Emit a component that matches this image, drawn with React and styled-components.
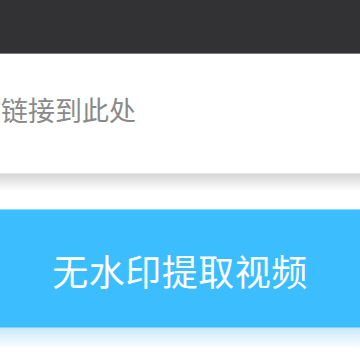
import React from "react";
import styled, { createGlobalStyle } from "styled-components";

const Global = createGlobalStyle`
  html, body { margin: 0; padding: 0; background: #ffffff; }
  body { font-family: "Noto Sans CJK SC", "Noto Sans", sans-serif; overflow: hidden; }
`;

const Page = styled.div`
  width: 360px;
  height: 360px;
  display: flex;
  flex-direction: column;
  background: #ffffff;
  overflow: hidden;
`;

const TopBar = styled.div`
  height: 53px;
  flex: none;
  background: #323234;
  border-bottom: 1px solid #7a7a7a;
`;

const InputPanel = styled.div`
  height: 119px;
  flex: none;
  display: flex;
  align-items: center;
  overflow: hidden;
  background: #ffffff;
  border-bottom: 1px solid #e6e6e6;
`;

const Field = styled.input`
  flex: none;
  width: 420px;
  margin-left: -53px;
  padding: 0;
  border: none;
  outline: none;
  background: transparent;
  font-family: "Noto Sans CJK SC", "Noto Sans", sans-serif;
  font-size: 27px;
  line-height: 40px;
  height: 40px;
  margin-top: -8px;
  color: #888888;
  &::placeholder { color: #8a8a8a; }
`;

const Shade = styled.div`
  height: ${(p) => p.$h}px;
  flex: none;
  background: linear-gradient(${(p) => p.$from}, #ffffff ${(p) => p.$fade}px);
`;

const ActionButton = styled.button`
  height: 119px;
  flex: none;
  display: flex;
  align-items: flex-start;
  justify-content: center;
  padding: 34px 0 0 0;
  margin: 0;
  border: none;
  border-top: 1px solid #8fd6fb;
  border-bottom: 1px solid #86d2fa;
  background: #3bbdfe;
  color: #ffffff;
  font-family: "Noto Sans CJK SC", "Noto Sans", sans-serif;
  font-size: 36px;
  line-height: 52px;
  letter-spacing: 0.5px;
`;

export default function App() {
  return (
    <Page>
      <Global />
      <TopBar />
      <InputPanel>
        <Field placeholder="粘贴链接到此处" />
      </InputPanel>
      <Shade $h={35} $from="#d6d6d6" $fade={17} />
      <ActionButton>无水印提取视频</ActionButton>
      <Shade $h={40} $from="#c8e9fa" $fade={22} />
    </Page>
  );
}
